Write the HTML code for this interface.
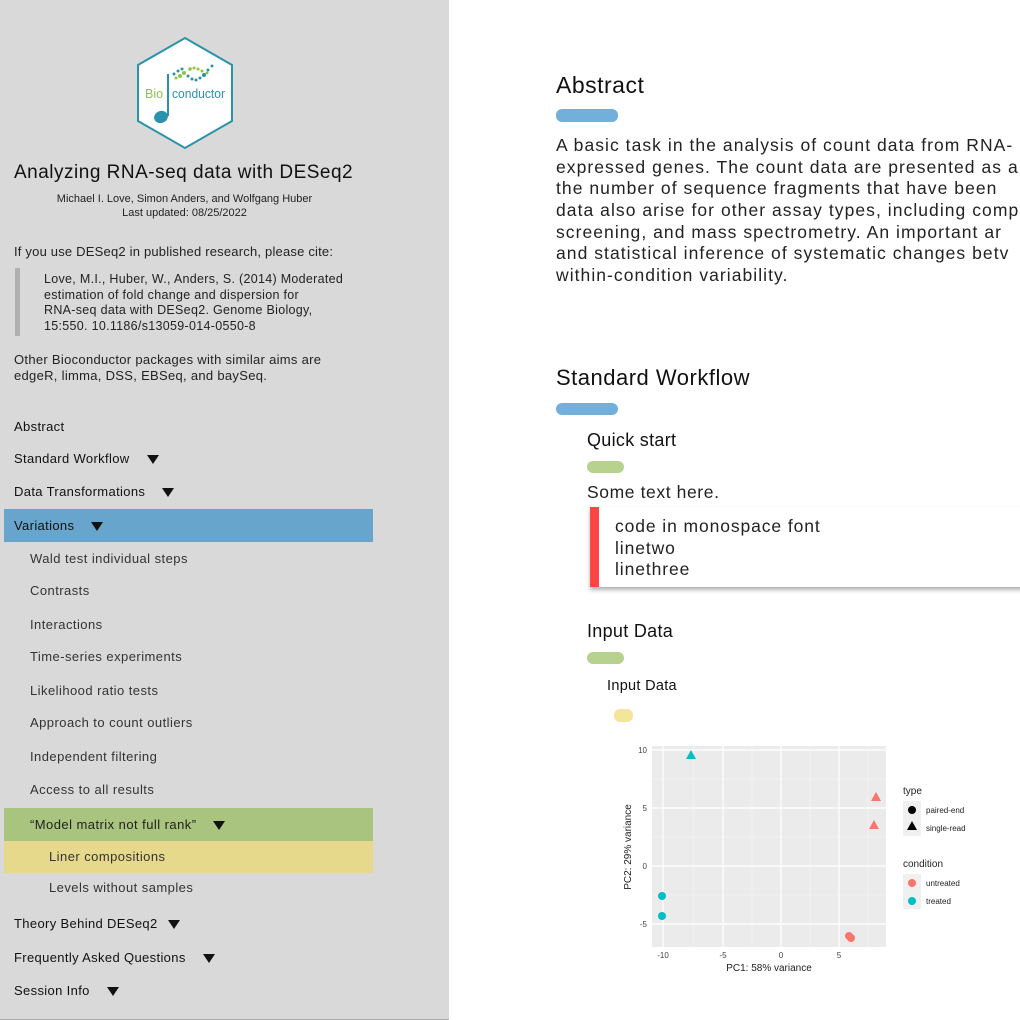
<!DOCTYPE html>
<html><head><meta charset="utf-8"><style>
*{margin:0;padding:0;box-sizing:border-box}
body{width:1020px;height:1020px;overflow:hidden;background:#fff;font-family:"Liberation Sans",sans-serif;position:relative;color:#111}
.a{position:absolute;white-space:nowrap}
#side{position:absolute;left:0;top:0;width:449px;height:1020px;background:#d9d9d9;border-bottom:1px solid #aaa}
.n{position:absolute;left:14px;font-size:13px;line-height:16px;color:#111;letter-spacing:0.35px}
.s{position:absolute;left:30px;font-size:13px;line-height:16px;color:#333;letter-spacing:0.45px}
.tri{display:inline-block;width:0;height:0;border-left:6px solid transparent;border-right:6px solid transparent;border-top:9px solid #111;margin-left:17px;vertical-align:-1px}
.bar{position:absolute;left:4px;width:369px;height:33px}
.main p{position:absolute;left:556px;font-size:17.5px;line-height:21.7px;color:#222;white-space:nowrap;letter-spacing:1.05px}
.pill{position:absolute;border-radius:6px}
</style></head><body>
<div id="side">
<svg class="a" style="left:134px;top:36px" width="102" height="114" viewBox="0 0 102 114">
<polygon points="51,2 98,29 98,85 51,112 4,85 4,29" fill="#fff" stroke="#2a93aa" stroke-width="2"/>
<g fill="#2a93aa"><circle cx="40" cy="38" r="1.5"/><circle cx="44" cy="35" r="1.5"/><circle cx="48" cy="33" r="1.5"/><circle cx="54" cy="40" r="1.5"/><circle cx="58" cy="43" r="1.5"/><circle cx="62" cy="44" r="1.5"/><circle cx="66" cy="42" r="1.5"/><circle cx="70" cy="39" r="2"/><circle cx="74" cy="34" r="1.5"/><circle cx="78" cy="30" r="1.5"/></g>
<g fill="#8cc63f"><circle cx="42" cy="42" r="1.5"/><circle cx="46" cy="40" r="2"/><circle cx="50" cy="37" r="2"/><circle cx="56" cy="33" r="1.8"/><circle cx="60" cy="32" r="1.5"/><circle cx="64" cy="33" r="1.5"/><circle cx="68" cy="35" r="1.5"/><circle cx="73" cy="37" r="1.5"/></g>
<text x="11" y="62" font-family="Liberation Sans" font-size="12.5" fill="#8cc63f">Bio</text>
<text x="38" y="62" font-family="Liberation Sans" font-size="12.5" fill="#2a93aa" textLength="53" lengthAdjust="spacingAndGlyphs">conductor</text>
<rect x="33" y="38" width="2" height="42" fill="#2a93aa"/>
<ellipse cx="27" cy="81" rx="7" ry="6" fill="#2a93aa" transform="rotate(-20 27 81)"/>
</svg>
<div class="a" style="left:14px;top:162px;font-size:19px;letter-spacing:0.5px">Analyzing RNA-seq data with DESeq2</div>
<div class="a" style="left:0;width:369px;text-align:center;top:193px;font-size:11px;line-height:13.5px;color:#222;white-space:normal">Michael I. Love, Simon Anders, and Wolfgang Huber<br>Last updated: 08/25/2022</div>
<div class="a" style="left:14px;top:244px;font-size:13px;color:#222;letter-spacing:0.2px">If you use DESeq2 in published research, please cite:</div>
<div class="a" style="left:15px;top:268px;width:5px;height:68px;background:#b0b0b0"></div>
<div class="a" style="left:44px;top:272px;font-size:12.5px;line-height:15.5px;color:#222;letter-spacing:0.3px">Love, M.I., Huber, W., Anders, S. (2014) Moderated<br>estimation of fold change and dispersion for<br>RNA-seq data with DESeq2. Genome Biology,<br>15:550. 10.1186/s13059-014-0550-8</div>
<div class="a" style="left:14px;top:352px;font-size:13px;line-height:15.5px;color:#222;letter-spacing:0.3px">Other Bioconductor packages with similar aims are<br>edgeR, limma, DSS, EBSeq, and baySeq.</div>
<div class="bar" style="top:509px;background:#67a5cc"></div>
<div class="bar" style="top:808px;height:33px;background:#a8c47f"></div>
<div class="bar" style="top:841px;height:32px;background:#e7d98b"></div>
<div class="n" style="top:419px">Abstract</div>
<div class="n" style="top:451px">Standard Workflow<span class="tri"></span></div>
<div class="n" style="top:484px">Data Transformations<span class="tri"></span></div>
<div class="n" style="top:518px">Variations<span class="tri"></span></div>
<div class="s" style="top:551px">Wald test individual steps</div>
<div class="s" style="top:583px">Contrasts</div>
<div class="s" style="top:617px">Interactions</div>
<div class="s" style="top:649px">Time-series experiments</div>
<div class="s" style="top:683px">Likelihood ratio tests</div>
<div class="s" style="top:715px">Approach to count outliers</div>
<div class="s" style="top:749px">Independent filtering</div>
<div class="s" style="top:782px">Access to all results</div>
<div class="s" style="top:817px;color:#222">“Model matrix not full rank”<span class="tri"></span></div>
<div class="s" style="top:849px;left:49px">Liner compositions</div>
<div class="s" style="top:880px;left:49px">Levels without samples</div>
<div class="n" style="top:916px">Theory Behind DESeq2<span class="tri" style="margin-left:10px"></span></div>
<div class="n" style="top:950px">Frequently Asked Questions<span class="tri"></span></div>
<div class="n" style="top:983px">Session Info<span class="tri"></span></div>
</div>
<div class="main">
<div class="a" style="left:556px;top:72px;font-size:23px;letter-spacing:0.5px">Abstract</div>
<div class="pill" style="left:556px;top:109px;width:62px;height:13px;background:#72b0db"></div>
<p style="top:135px">A basic task in the analysis of count data from RNA-</p>
<p style="top:157px">expressed genes. The count data are presented as a</p>
<p style="top:178px">the number of sequence fragments that have been</p>
<p style="top:200px">data also arise for other assay types, including comp</p>
<p style="top:222px">screening, and mass spectrometry. An important ar</p>
<p style="top:243px">and statistical inference of systematic changes betv</p>
<p style="top:265px">within-condition variability.</p>
<div class="a" style="left:556px;top:365px;font-size:22px;letter-spacing:0.5px">Standard Workflow</div>
<div class="pill" style="left:556px;top:403px;width:62px;height:12px;background:#72b0db"></div>
<div class="a" style="left:587px;top:430px;font-size:18px;letter-spacing:0.3px">Quick start</div>
<div class="pill" style="left:587px;top:461px;width:37px;height:12px;background:#b7d18f"></div>
<div class="a" style="left:587px;top:482px;font-size:17.5px;color:#222;letter-spacing:0.6px">Some text here.</div>
<div class="a" style="left:590px;top:507px;width:440px;height:80px;background:#fff;box-shadow:0 3px 4px rgba(0,0,0,0.3);border-left:9px solid #f44"></div>
<div class="a" style="left:615px;top:516px;font-size:17.5px;line-height:21.7px;color:#222;letter-spacing:0.9px">code in monospace font<br>linetwo<br>linethree</div>
<div class="a" style="left:587px;top:621px;font-size:18px;letter-spacing:0.3px">Input Data</div>
<div class="pill" style="left:587px;top:652px;width:37px;height:12px;background:#b7d18f"></div>
<div class="a" style="left:607px;top:678px;font-size:14.5px;letter-spacing:0.3px">Input Data</div>
<div class="pill" style="left:614px;top:709px;width:19px;height:13px;background:#f5e59a"></div>
<svg class="a" style="left:600px;top:730px" width="420" height="250" font-family="Liberation Sans">
<rect x="52" y="16" width="234" height="201" fill="#ebebeb"/>
<g stroke="#f6f6f6" stroke-width="0.6"><line x1="93" y1="16" x2="93" y2="217"/><line x1="152" y1="16" x2="152" y2="217"/><line x1="210" y1="16" x2="210" y2="217"/><line x1="268" y1="16" x2="268" y2="217"/><line x1="52" y1="49" x2="286" y2="49"/><line x1="52" y1="107" x2="286" y2="107"/><line x1="52" y1="165" x2="286" y2="165"/></g>
<g stroke="#fff" stroke-width="1.2"><line x1="63" y1="16" x2="63" y2="217"/><line x1="123" y1="16" x2="123" y2="217"/><line x1="181" y1="16" x2="181" y2="217"/><line x1="239" y1="16" x2="239" y2="217"/><line x1="52" y1="20" x2="286" y2="20"/><line x1="52" y1="78" x2="286" y2="78"/><line x1="52" y1="136" x2="286" y2="136"/><line x1="52" y1="194" x2="286" y2="194"/></g>
<g font-size="8" fill="#444" text-anchor="end"><text x="47" y="23">10</text><text x="47" y="81">5</text><text x="47" y="139">0</text><text x="47" y="197">-5</text></g>
<g font-size="8" fill="#444" text-anchor="middle"><text x="63" y="228">-10</text><text x="123" y="228">-5</text><text x="181" y="228">0</text><text x="239" y="228">5</text></g>
<text x="169" y="241" font-size="10" text-anchor="middle" fill="#222">PC1: 58% variance</text>
<text transform="translate(31 117) rotate(-90)" font-size="10" text-anchor="middle" fill="#222">PC2: 29% variance</text>
<g fill="#00bfc4"><polygon points="91,20 96,29 86,29"/><circle cx="62" cy="166" r="4"/><circle cx="62" cy="186" r="4"/></g>
<g fill="#f8766d"><polygon points="276,62 281,71 271,71"/><polygon points="274,90 279,99 269,99"/><circle cx="249" cy="206" r="4"/><circle cx="251" cy="208" r="4"/></g>
<text x="303" y="64" font-size="10" fill="#222">type</text>
<rect x="303" y="71" width="18" height="35" fill="#f0f0f0"/>
<circle cx="312" cy="80" r="4" fill="#000"/><polygon points="312,91 317,100 307,100" fill="#000"/>
<text x="326" y="83" font-size="8" fill="#222">paired-end</text><text x="326" y="101" font-size="8" fill="#222">single-read</text>
<text x="303" y="137" font-size="10" fill="#222">condition</text>
<rect x="303" y="144" width="18" height="35" fill="#f0f0f0"/>
<circle cx="312" cy="153" r="4" fill="#f8766d"/><circle cx="312" cy="171" r="4" fill="#00bfc4"/>
<text x="326" y="156" font-size="8" fill="#222">untreated</text><text x="326" y="174" font-size="8" fill="#222">treated</text>
</svg>
</div>
</body></html>
